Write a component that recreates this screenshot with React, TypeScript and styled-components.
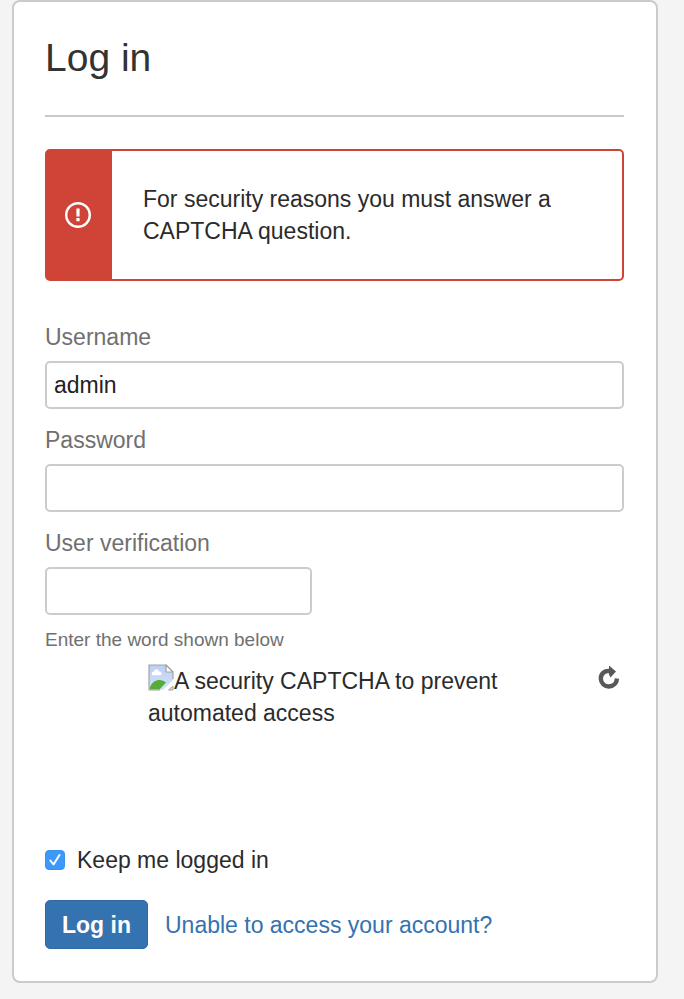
import React, { useState } from "react";
import styled, { createGlobalStyle } from "styled-components";

const GlobalStyle = createGlobalStyle`
  * { box-sizing: border-box; }
  body {
    margin: 0;
    background: #f4f4f4;
    color: #2b2b2b;
    font-family: "Liberation Sans", Arial, sans-serif;
    font-size: 23px;
    line-height: 32px;
  }
`;

const Card = styled.main`
  margin: 0 26px 16px 12px;
  padding: 32px 32px 32px 31px;
  background: #fff;
  border: 2px solid #cbcbcb;
  border-radius: 8px;
`;

const Title = styled.h1`
  margin: 0;
  padding-bottom: 33px;
  border-bottom: 2px solid #c9c9c9;
  color: #333;
  font-size: 39px;
  line-height: 48px;
  font-weight: 400;
`;

const Alert = styled.div`
  display: flex;
  margin-top: 32px;
  border: 2px solid #d04437;
  border-radius: 5px;
  background: #fff;
`;

const AlertMark = styled.div`
  display: flex;
  flex: 0 0 65px;
  align-items: center;
  justify-content: center;
  padding-right: 3px;
  background: #d04437;
`;

const AlertText = styled.p`
  margin: 0;
  padding: 32px 31px;
`;

const Form = styled.form`
  display: flex;
  flex-direction: column;
  gap: 15px;
  margin-top: 40px;
`;

const Field = styled.div`
  display: flex;
  flex-direction: column;
  gap: 8px;
`;

const Label = styled.label`
  color: #707070;
`;

const TextInput = styled.input<{ $short?: boolean }>`
  width: ${(p) => (p.$short ? "267px" : "100%")};
  max-width: 100%;
  height: 48px;
  padding: 0 7px;
  border: 2px solid #cccccc;
  border-radius: 5px;
  background: #fff;
  color: #222;
  font: inherit;
`;

const Hint = styled.p`
  margin: 0;
  color: #707070;
  font-size: 19px;
  line-height: 33px;
`;

const CaptchaRow = styled.div`
  display: flex;
  align-items: flex-start;
  justify-content: space-between;
  min-height: 173px;
  padding-left: 103px;
`;

const CaptchaImage = styled.div`
  max-width: 372px;
  svg { vertical-align: -2px; }
`;

const RefreshButton = styled.button`
  display: flex;
  padding: 0;
  margin: 1px 4px 0 0;
  border: 0;
  background: none;
  cursor: pointer;
`;

const RememberRow = styled.label`
  display: flex;
  align-items: center;
  gap: 12px;
  margin-top: -8px;
`;

const Checkbox = styled.input`
  appearance: none;
  width: 20px;
  height: 20px;
  margin: 0;
  border-radius: 4px;
  border: 1px solid #b5b5b5;
  background: #fff;
  &:checked {
    border-color: #3b90f0;
    background: #3b99fc url("data:image/svg+xml,%3Csvg xmlns='http://www.w3.org/2000/svg' viewBox='0 0 18 18'%3E%3Cpath d='M4.3 9.5 7.5 13.5 13.5 4' fill='none' stroke='white' stroke-width='2' stroke-linecap='round' stroke-linejoin='round'/%3E%3C/svg%3E") center / 100%;
  }
`;

const Actions = styled.div`
  display: flex;
  align-items: center;
  gap: 17px;
  margin-top: 9px;
`;

const SubmitButton = styled.button`
  height: 49px;
  padding: 0 16px;
  border: 1px solid #3068a4;
  border-radius: 5px;
  background: #3572b0;
  color: #fff;
  font: inherit;
  font-weight: 700;
  cursor: pointer;
`;

const HelpLink = styled.a`
  color: #3572b0;
  text-decoration: none;
`;

const ErrorIcon = () => (
  <svg width="28" height="28" viewBox="0 0 28 28" aria-hidden="true">
    <circle cx="14" cy="14" r="11.8" fill="none" stroke="#fff" strokeWidth="2.4" />
    <path d="M12.400 7.500h3.200v8h-3.200zM12.400 17h3.200v3.300h-3.200z" fill="#fff" />
  </svg>
);

const BrokenImageIcon = () => (
  <svg width="26" height="27" viewBox="0 0 26 27" aria-hidden="true">
    <defs>
      <linearGradient id="sky" x1="0" y1="0" x2="0" y2="1">
        <stop offset="0" stopColor="#bccff5" />
        <stop offset="1" stopColor="#d5e2fa" />
      </linearGradient>
    </defs>
    <path d="M1 1h17l7 7v8L15 26H1z" fill="url(#sky)" stroke="none" />
    <path d="M4.500 11.200c-1.500-2-.3-3.700 1.300-3.500C6.500 4.500 10.500 4.600 11 7.600c2.200-.2 3.300 2 2 3.600z" fill="#fff" />
    <path d="M2 23c3-7.500 11-9 16-4.500L11.500 25.500H2z" fill="#53ad37" />
    <path d="M25 15V8l-7-7H1v25h11" fill="none" stroke="#a3a3a3" strokeWidth="1.200" />
    <path d="M18 1v7h7z" fill="#fff" stroke="#a3a3a3" strokeWidth="1.200" strokeLinejoin="round" />
    <path d="M20.500 26H25v-4z" fill="#cbdcf5" stroke="#a3a3a3" strokeWidth="1" />
  </svg>
);

const RefreshIcon = () => (
  <svg width="22" height="26" viewBox="0 0 22 26" aria-hidden="true">
    <path d="M12 6.200C6.500 5.200 2.800 9 2.800 13.500c0 4.500 3.600 8 8 8 4.600 0 7.900-3.400 8.200-8" fill="none" stroke="#595959" strokeWidth="4.400" />
    <path d="M11 0.500 18 6.500l-5.500 6-1.500-3z" fill="#595959" />
  </svg>
);

export default function App() {
  const [username, setUsername] = useState("admin");
  const [remember, setRemember] = useState(true);
  return (
    <>
      <GlobalStyle />
      <Card>
        <Title>Log in</Title>
        <Alert role="alert">
          <AlertMark><ErrorIcon /></AlertMark>
          <AlertText>For security reasons you must answer a CAPTCHA question.</AlertText>
        </Alert>
        <Form onSubmit={(e) => e.preventDefault()}>
          <Field>
            <Label htmlFor="username">Username</Label>
            <TextInput id="username" value={username} onChange={(e) => setUsername(e.target.value)} />
          </Field>
          <Field>
            <Label htmlFor="password">Password</Label>
            <TextInput id="password" type="password" />
          </Field>
          <Field>
            <Label htmlFor="captcha">User verification</Label>
            <TextInput id="captcha" $short aria-describedby="captcha-hint" />
            <Hint id="captcha-hint">Enter the word shown below</Hint>
            <CaptchaRow>
              <CaptchaImage>
                <BrokenImageIcon />A security CAPTCHA to prevent automated access
              </CaptchaImage>
              <RefreshButton type="button" aria-label="Refresh captcha"><RefreshIcon /></RefreshButton>
            </CaptchaRow>
          </Field>
          <RememberRow>
            <Checkbox type="checkbox" checked={remember} onChange={(e) => setRemember(e.target.checked)} />
            Keep me logged in
          </RememberRow>
          <Actions>
            <SubmitButton type="submit">Log in</SubmitButton>
            <HelpLink href="#help">Unable to access your account?</HelpLink>
          </Actions>
        </Form>
      </Card>
    </>
  );
}
